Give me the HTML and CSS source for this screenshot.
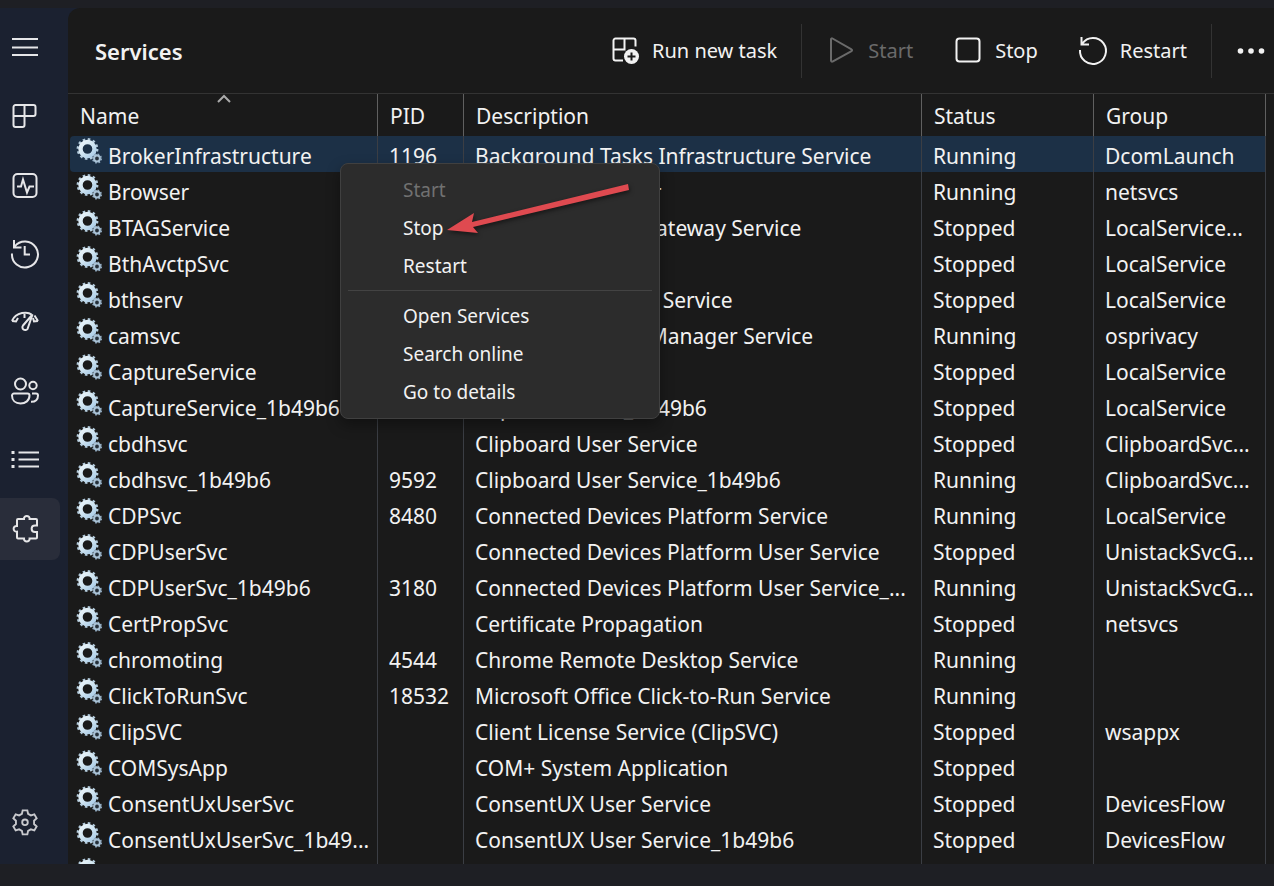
FILE: index.html
```html
<!DOCTYPE html>
<html lang="en">
<head>
<meta charset="utf-8">
<title>Services</title>
<link rel="stylesheet" href="styles.css">
</head>
<body>
<svg class="sprite" aria-hidden="true">
  <defs>
    <linearGradient id="steel" gradientUnits="userSpaceOnUse" x1="3" y1="2" x2="20" y2="21">
      <stop offset="0" stop-color="#f0f7fb"/><stop offset="0.5" stop-color="#cfe4f1"/><stop offset="1" stop-color="#9cc3e4"/>
    </linearGradient>
    <symbol id="gears" viewBox="0 0 27 27">
      <circle cx="11.5" cy="11" r="9.6" fill="none" stroke="#b3cbdc" stroke-width="2.6" stroke-dasharray="2.5 2.526"/>
      <circle cx="11.5" cy="11" r="7" fill="none" stroke="url(#steel)" stroke-width="4.4"/>
      <circle cx="21" cy="20.5" r="4.3" fill="none" stroke="#8fa9bf" stroke-width="1.6" stroke-dasharray="1.7 1.677"/>
      <circle cx="21" cy="20.5" r="2.9" fill="#26303a" stroke="#a9c2d6" stroke-width="2"/>
    </symbol>
  </defs>
</svg>
<div class="window">
  <nav class="sidebar" aria-label="Sections">
    <button class="nav-item" aria-label="Menu"><svg viewBox="0 0 30 30"><path d="M2 8h26M2 16.500h26M2 24h26"/></svg></button>
    <button class="nav-item" aria-label="Processes"><svg viewBox="0 0 30 30"><path d="M5.500 5h18a2 2 0 0 1 2 2v7a2 2 0 0 1-2 2h-20M14.500 5v20a2 2 0 0 1-2 2h-7a2 2 0 0 1-2-2V7a2 2 0 0 1 2-2"/></svg></button>
    <button class="nav-item" aria-label="Performance"><svg viewBox="0 0 30 30"><rect x="3.500" y="5" width="23" height="23" rx="4"/><path d="M7 17.500h4l2-7 4 13 2.500-6H24"/></svg></button>
    <button class="nav-item" aria-label="App history"><svg viewBox="0 0 30 30"><path d="M4 2v7.500h7.500M4.700 8.500A13 13 0 1 1 2 15.500M14.700 8v8.500H20"/></svg></button>
    <button class="nav-item" aria-label="Startup apps"><svg viewBox="0 0 30 30"><path d="M2 14C6 4.500 18 4.500 21.500 7.500M2 14l4 .5 2-3.500M14.500 7v4M28 14l-4 .5-1-3.500M24.500 8.500 28 14"/><path d="M22.500 7.500 13 18.500a2.500 2.500 0 1 0 4.500 3.500z"/></svg></button>
    <button class="nav-item" aria-label="Users"><svg viewBox="0 0 30 30"><circle cx="10.500" cy="8" r="5.500"/><circle cx="23" cy="9.500" r="3.700"/><path d="M4 17.500h13.500a2 2 0 0 1 2 2c0 5-4 8-9 8s-8.500-3-8.500-8a2 2 0 0 1 2-2zM22 17.500h4a2 2 0 0 1 2 2c0 4-2.500 6.500-7 6.300"/></svg></button>
    <button class="nav-item" aria-label="Details"><svg viewBox="0 0 30 30"><path d="M8.500 7.500H29M8.500 14.500H29M8.500 21.500H29"/><path class="dots" d="M1.500 6h3v3h-3zM1.500 13h3v3h-3zM1.500 20h3v3h-3z"/></svg></button>
    <button class="nav-item current" aria-label="Services" aria-current="page"><svg viewBox="0 0 30 30"><path d="M8 5h6c-.4-4 6-4 5.600 0H26a1 1 0 0 1 1 1v5.500h-2c-4.500 0-4.500 6.500 0 6.500h2v5.500a1 1 0 0 1-1 1h-6.400c.4 4-6 4-5.600 0H8a1 1 0 0 1-1-1v-5.800c-4.500.4-4.500-6.200 0-5.800V6a1 1 0 0 1 1-1z"/></svg></button>
    <button class="nav-item settings" aria-label="Settings"><svg viewBox="0 0 30 30"><path d="M12.500 2.500h5l.8 3.700 3 1.700 3.700-1.200 2.500 4.300-2.800 2.600v3.600l2.800 2.600-2.500 4.300-3.700-1.200-3 1.700-.8 3.700h-5l-.8-3.700-3-1.700L5 24.100l-2.500-4.300 2.800-2.600v-3.600l-2.800-2.600L5 6.700l3.700 1.200 3-1.700z"/><circle cx="15" cy="15.300" r="3"/></svg></button>
  </nav>
  <main class="content">
    <header class="toolbar">
      <h1>Services</h1>
      <button class="tool"><svg viewBox="0 0 30 30"><path d="M5.500 2.500h18a2 2 0 0 1 2 2v6M14.500 2.500v11h-11M13 24.500H5.500a2 2 0 0 1-2-2v-18a2 2 0 0 1 2-2"/><circle class="badge" cx="21.500" cy="20.500" r="7.500"/><path class="plus" d="M21.500 16.500v8M17.500 20.500h8"/></svg>Run new task</button>
      <span class="divider"></span>
      <button class="tool" disabled><svg viewBox="0 0 30 30"><path d="M5 3.500v21a1 1 0 0 0 1.500 1l19-10.300a1 1 0 0 0 0-1.800L6.500 2.500A1 1 0 0 0 5 3.500z"/></svg>Start</button>
      <button class="tool stop"><svg viewBox="0 0 30 30"><rect x="3.500" y="2.500" width="23" height="23" rx="3"/></svg>Stop</button>
      <button class="tool restart"><svg viewBox="0 0 30 30"><path d="M3.500 1v7.500H11M4.300 7.500A13 13 0 1 1 2 14"/></svg>Restart</button>
      <span class="divider"></span>
      <button class="tool" aria-label="More options"><svg viewBox="0 0 30 30"><g class="dots"><circle cx="4.500" cy="15" r="2.800"/><circle cx="15" cy="15" r="2.800"/><circle cx="25.500" cy="15" r="2.800"/></g></svg></button>
    </header>
    <div class="list">
      <table>
        <colgroup><col class="c-name"><col class="c-pid"><col><col class="c-status"><col class="c-group"></colgroup>
        <thead><tr><th class="sorted" aria-sort="ascending">Name<svg viewBox="0 0 14 8"><path d="M1 7l6-6 6 6"/></svg></th><th>PID</th><th>Description</th><th>Status</th><th>Group</th></tr></thead>
        <tbody>
          <tr class="selected"><td><svg><use href="#gears"/></svg>BrokerInfrastructure</td><td>1196</td><td>Background Tasks Infrastructure Service</td><td>Running</td><td>DcomLaunch</td></tr>
          <tr><td><svg><use href="#gears"/></svg>Browser</td><td></td><td>Computer Browser</td><td>Running</td><td>netsvcs</td></tr>
          <tr><td><svg><use href="#gears"/></svg>BTAGService</td><td></td><td>Bluetooth Audio Gateway Service</td><td>Stopped</td><td>LocalService...</td></tr>
          <tr><td><svg><use href="#gears"/></svg>BthAvctpSvc</td><td></td><td>AVCTP service</td><td>Stopped</td><td>LocalService</td></tr>
          <tr><td><svg><use href="#gears"/></svg>bthserv</td><td></td><td>Bluetooth Support Service</td><td>Stopped</td><td>LocalService</td></tr>
          <tr><td><svg><use href="#gears"/></svg>camsvc</td><td></td><td>Capability Access Manager Service</td><td>Running</td><td>osprivacy</td></tr>
          <tr><td><svg><use href="#gears"/></svg>CaptureService</td><td></td><td>CaptureService</td><td>Stopped</td><td>LocalService</td></tr>
          <tr><td><svg><use href="#gears"/></svg>CaptureService_1b49b6</td><td></td><td>CaptureService_1b49b6</td><td>Stopped</td><td>LocalService</td></tr>
          <tr><td><svg><use href="#gears"/></svg>cbdhsvc</td><td></td><td>Clipboard User Service</td><td>Stopped</td><td>ClipboardSvc...</td></tr>
          <tr><td><svg><use href="#gears"/></svg>cbdhsvc_1b49b6</td><td>9592</td><td>Clipboard User Service_1b49b6</td><td>Running</td><td>ClipboardSvc...</td></tr>
          <tr><td><svg><use href="#gears"/></svg>CDPSvc</td><td>8480</td><td>Connected Devices Platform Service</td><td>Running</td><td>LocalService</td></tr>
          <tr><td><svg><use href="#gears"/></svg>CDPUserSvc</td><td></td><td>Connected Devices Platform User Service</td><td>Stopped</td><td>UnistackSvcG...</td></tr>
          <tr><td><svg><use href="#gears"/></svg>CDPUserSvc_1b49b6</td><td>3180</td><td>Connected Devices Platform User Service_...</td><td>Running</td><td>UnistackSvcG...</td></tr>
          <tr><td><svg><use href="#gears"/></svg>CertPropSvc</td><td></td><td>Certificate Propagation</td><td>Stopped</td><td>netsvcs</td></tr>
          <tr><td><svg><use href="#gears"/></svg>chromoting</td><td>4544</td><td>Chrome Remote Desktop Service</td><td>Running</td><td></td></tr>
          <tr><td><svg><use href="#gears"/></svg>ClickToRunSvc</td><td>18532</td><td>Microsoft Office Click-to-Run Service</td><td>Running</td><td></td></tr>
          <tr><td><svg><use href="#gears"/></svg>ClipSVC</td><td></td><td>Client License Service (ClipSVC)</td><td>Stopped</td><td>wsappx</td></tr>
          <tr><td><svg><use href="#gears"/></svg>COMSysApp</td><td></td><td>COM+ System Application</td><td>Stopped</td><td></td></tr>
          <tr><td><svg><use href="#gears"/></svg>ConsentUxUserSvc</td><td></td><td>ConsentUX User Service</td><td>Stopped</td><td>DevicesFlow</td></tr>
          <tr><td><svg><use href="#gears"/></svg>ConsentUxUserSvc_1b49...</td><td></td><td>ConsentUX User Service_1b49b6</td><td>Stopped</td><td>DevicesFlow</td></tr>
          <tr><td><svg><use href="#gears"/></svg></td><td></td><td></td><td></td><td></td></tr>
        </tbody>
      </table>
    </div>
    <div class="menu" role="menu">
      <button role="menuitem" disabled>Start</button>
      <button role="menuitem">Stop</button>
      <button role="menuitem">Restart</button>
      <hr>
      <button role="menuitem">Open Services</button>
      <button role="menuitem">Search online</button>
      <button role="menuitem">Go to details</button>
    </div>
    <svg class="arrow" viewBox="0 0 190 54" aria-hidden="true"><path d="M3 46 30 29 28 38 184 0 185 6 29 43 34 49z"/></svg>
  </main>
</div>
</body>
</html>
```
FILE: styles.css
```css
* { box-sizing: border-box; }
body {
  margin: 0;
  height: 100vh;
  padding: 8px 0 22px;
  background: #1e1f24;
  color: #f2f2f2;
  font: 21px/28px "Noto Sans", "Open Sans", sans-serif;
  overflow: hidden;
}
button {
  font: inherit;
  color: inherit;
  background: none;
  border: 0;
  padding: 0;
}
svg { flex: none; fill: none; stroke: currentColor; stroke-width: 2; overflow: visible; }
.sprite { position: absolute; width: 0; height: 0; }
.dots { fill: currentColor; stroke: none; }
.window { display: flex; height: 100%; background: #1b2130; }

.sidebar {
  flex: none;
  width: 68px;
  padding: 7px 8px 11px 0;
  display: flex;
  flex-direction: column;
  gap: 7px;
}
.nav-item {
  height: 62px;
  padding-right: 10px;
  display: flex;
  align-items: center;
  justify-content: center;
  border-radius: 0 8px 8px 0;
}
.nav-item svg { width: 30px; height: 30px; color: #e6e6e8; }
.current { background: #292d3a; }
.settings { margin-top: auto; }
.nav-item.settings svg { width: 28px; height: 28px; color: #c8c9cd; }

.content {
  position: relative;
  flex: 1;
  min-width: 0;
  display: flex;
  flex-direction: column;
  background: #1a1a1a;
  border-top-left-radius: 12px;
  overflow: hidden;
}
.toolbar {
  flex: none;
  height: 86px;
  padding: 0 8px 0 27px;
  display: flex;
  align-items: center;
  border-bottom: 1px solid #333;
  font-size: 20px;
}
h1 { margin: 0 auto 0 0; font-size: 22px; font-weight: 600; }
.tool { display: flex; align-items: center; gap: 12px; }
.tool svg { width: 30px; height: 30px; }
.tool:disabled { color: #6a6a6a; }
.divider { width: 1px; height: 54px; margin: 0 24px; background: #333; }
.stop, .restart { margin-left: 40px; }
.badge { fill: currentColor; stroke: none; }
.plus { stroke: #1a1a1a; }

.list { flex: 1; min-height: 0; padding: 0 8px 0 2px; overflow: hidden; }
table { width: 100%; table-layout: fixed; border-collapse: separate; border-spacing: 0; }
.c-name { width: 308px; }
.c-pid { width: 86px; }
.c-status, .c-group { width: 172px; }
th, td {
  height: 36px;
  padding: 4px 0 0 12px;
  text-align: left;
  font-weight: 400;
  white-space: nowrap;
  overflow: hidden;
  border-right: 1px solid #3b3e44;
}
td { padding: 3px 0 0 11px; }
th { height: 42px; padding-top: 2px; border-right-color: #606060; }
th:first-child { padding-left: 10px; }
td:first-child { padding-left: 6px; }
.selected td { background: #1c3046; }
.selected td:first-child { border-radius: 4px 0 0 4px; }
.sorted { position: relative; }
.sorted svg { position: absolute; top: 1px; left: 48%; width: 14px; height: 8px; color: #aaa; }
td svg { width: 27px; height: 27px; margin: -8px 5px 0 0; vertical-align: -1px; stroke: none; }

.menu {
  position: absolute;
  left: 272px;
  top: 155px;
  width: 320px;
  padding: 7px;
  display: flex;
  flex-direction: column;
  background: #2c2c2c;
  border: 1px solid #404040;
  border-radius: 8px;
  box-shadow: 0 6px 14px rgba(0, 0, 0, 0.35);
  font-size: 19px;
}
.menu button { height: 38px; padding-left: 55px; text-align: left; }
.menu button:disabled { color: #717171; }
.menu hr { width: 100%; margin: 5px 0 6px; border: 0; border-top: 1px solid #434343; }
.arrow {
  position: absolute;
  left: 376px;
  top: 176px;
  width: 190px;
  height: 54px;
  fill: #df4a50;
  stroke: none;
  filter: drop-shadow(1px 2px 2px rgba(0, 0, 0, 0.5));
}
```
